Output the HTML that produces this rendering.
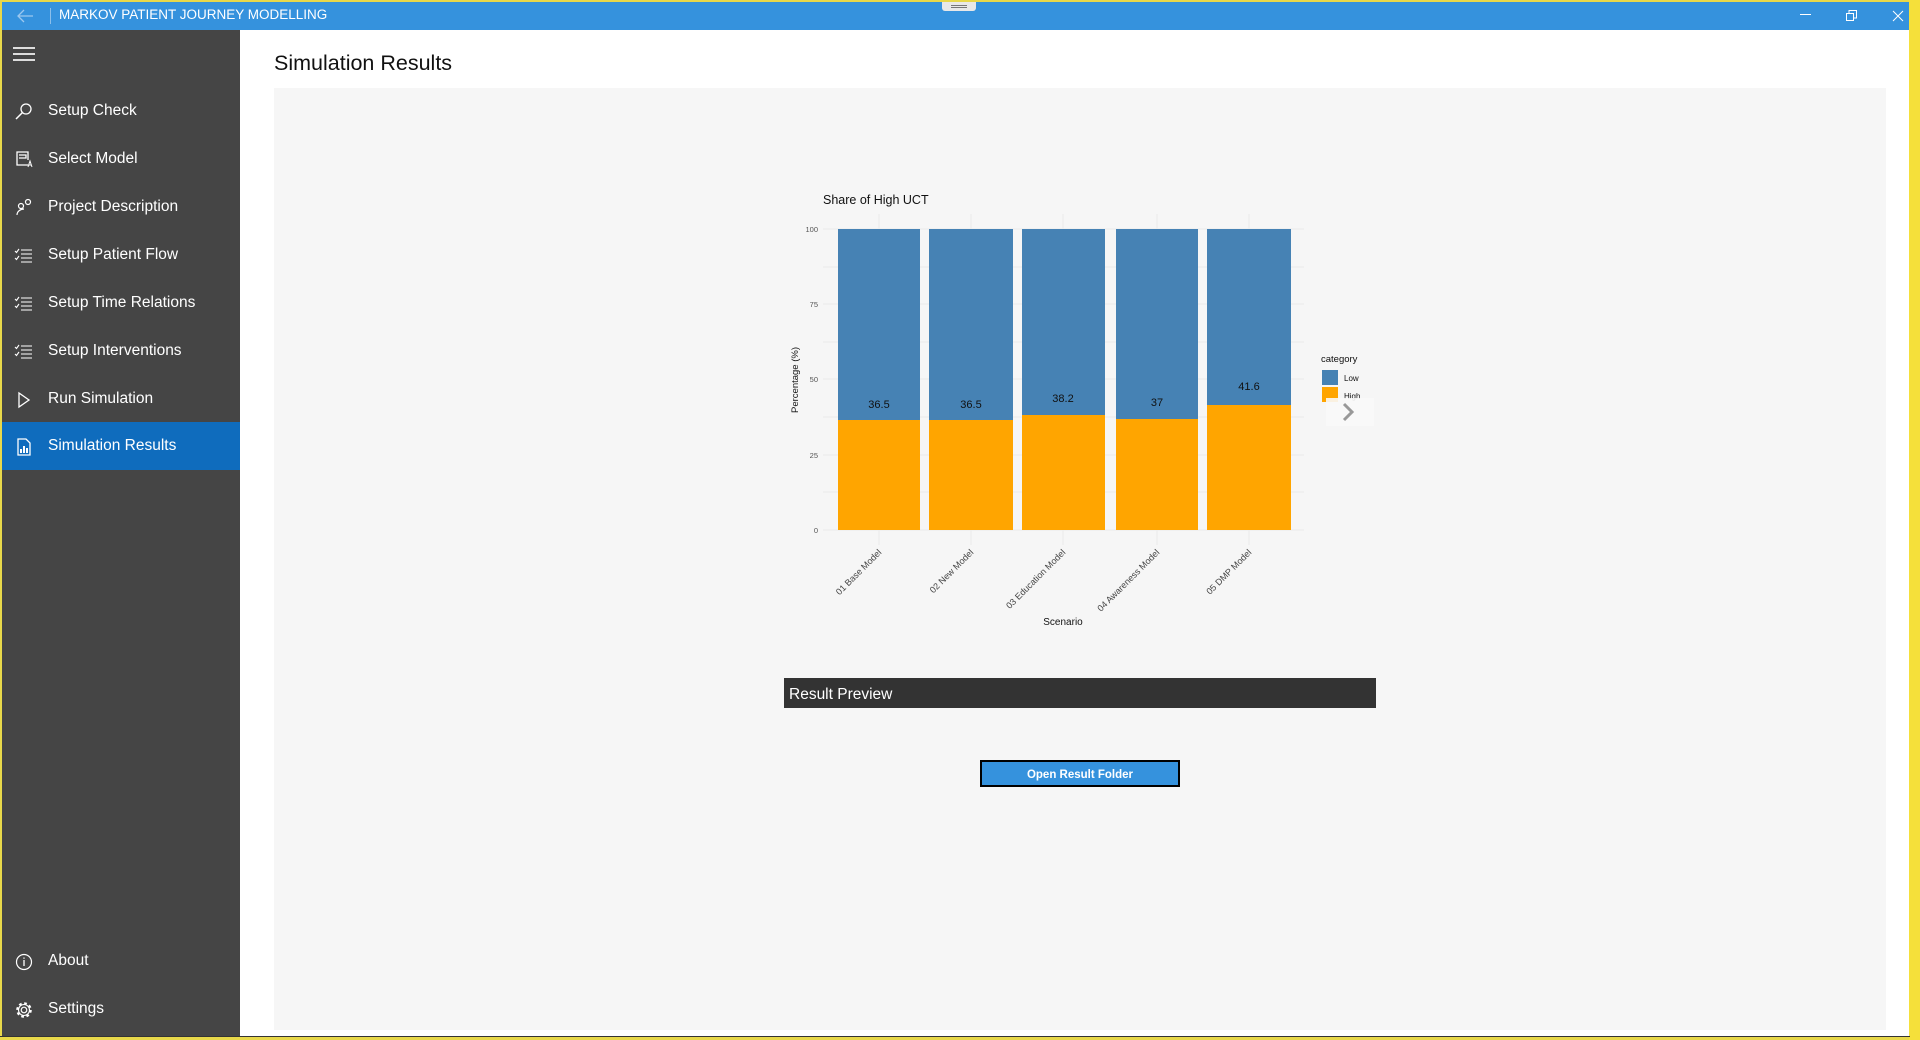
<!DOCTYPE html>
<html><head><meta charset="utf-8"><style>
*{margin:0;padding:0;box-sizing:border-box}
body{width:1920px;height:1040px;position:relative;overflow:hidden;background:#e8d84a;font-family:"Segoe UI","Liberation Sans",sans-serif}
.a{position:absolute}
#tb{left:2px;top:2px;width:1907px;height:28px;background:#3592dd;color:#fff;font-size:14px}
#sb{left:2px;top:30px;width:238px;height:1006px;background:#454545}
#main{left:240px;top:30px;width:1669px;height:1006px;background:#fff}
.it{position:absolute;left:0;width:238px;height:48px;color:#fff;font-size:15.5px;line-height:48px;padding-left:46px}
.ic{position:absolute;left:12px;top:15px;width:20px;height:20px}
</style></head><body>
<div class="a" style="left:1909px;top:0;width:11px;height:1040px;background:#f5e03a"></div>
<div class="a" style="left:1908px;top:2px;width:1px;height:1035px;background:#333"></div>
<div class="a" style="left:0;top:1036px;width:1910px;height:1px;background:#333"></div>
<div class="a" id="tb">
 <svg class="a" style="left:14px;top:7px" width="18" height="14" viewBox="0 0 18 14"><path d="M8 1L2 7L8 13M2 7H17" stroke="#9cc8ef" stroke-width="1.3" fill="none"/></svg>
 <div class="a" style="left:48px;top:6px;width:1px;height:16px;background:#8cbfea"></div>
 <div class="a" style="left:57px;top:5px;font-size:13.5px">MARKOV PATIENT JOURNEY MODELLING</div>
 <div class="a" style="left:940px;top:0;width:34px;height:9px;background:#e8e8e8;border-radius:0 0 3px 3px"><div style="margin:3px 9px;border-top:1px solid #777;border-bottom:1px solid #777;height:3px"></div></div>
 <div class="a" style="left:1798px;top:12px;width:11px;height:1px;background:#fff"></div>
 <svg class="a" style="left:1844px;top:8px" width="12" height="12"><rect x="0.5" y="3.5" width="7" height="7" fill="none" stroke="#fff"/><path d="M3 3.5V0.5H10.5V8H8" fill="none" stroke="#fff"/></svg>
 <svg class="a" style="left:1890px;top:8px" width="12" height="12"><path d="M1 1L11 11M11 1L1 11" stroke="#fff"/></svg>
</div>
<div class="a" id="sb">
 <svg class="a" style="left:11px;top:16px" width="22" height="16"><path d="M0 2H22M0 8H22M0 14H22" stroke="#ddd" stroke-width="2"/></svg>
 <div class="it" style="top:57px"><svg class="ic" viewBox="0 0 20 20"><circle cx="12" cy="7" r="5" fill="none" stroke="#fff" stroke-width="1.3"/><path d="M8.5 10.5L2 17" stroke="#fff" stroke-width="1.5"/></svg>Setup Check</div>
 <div class="it" style="top:105px"><svg class="ic" viewBox="0 0 20 20"><path d="M14 15H3V2H14V10M5 5H12V8H5" fill="none" stroke="#fff" stroke-width="1.3"/><path d="M14 17L16 11L18 17M14.7 15H17.3" stroke="#fff" fill="none"/></svg>Select Model</div>
 <div class="it" style="top:153px"><svg class="ic" viewBox="0 0 20 20"><circle cx="7" cy="8" r="2.5" fill="none" stroke="#fff" stroke-width="1.2"/><circle cx="14" cy="4" r="2.5" fill="none" stroke="#fff" stroke-width="1.2"/><path d="M3 17C3 13 7 11 10 11M3 17" fill="none" stroke="#fff" stroke-width="1.2"/></svg>Project Description</div>
 <div class="it" style="top:201px"><svg class="ic" viewBox="0 0 20 20"><path d="M7 4H18M7 8H18M7 12H18M7 16H18M1 5L2.5 6.5L5 3M1 12L2.5 13.5L5 10" fill="none" stroke="#fff" stroke-width="1.1"/></svg>Setup Patient Flow</div>
 <div class="it" style="top:249px"><svg class="ic" viewBox="0 0 20 20"><path d="M7 4H18M7 8H18M7 12H18M7 16H18M1 5L2.5 6.5L5 3M1 12L2.5 13.5L5 10" fill="none" stroke="#fff" stroke-width="1.1"/></svg>Setup Time Relations</div>
 <div class="it" style="top:297px"><svg class="ic" viewBox="0 0 20 20"><path d="M7 4H18M7 8H18M7 12H18M7 16H18M1 5L2.5 6.5L5 3M1 12L2.5 13.5L5 10" fill="none" stroke="#fff" stroke-width="1.1"/></svg>Setup Interventions</div>
 <div class="it" style="top:345px"><svg class="ic" viewBox="0 0 20 20"><path d="M5 3V17L15 10Z" fill="none" stroke="#fff" stroke-width="1.3"/></svg>Run Simulation</div>
 <div class="it" style="top:392px;background:#0f6cbd"><svg class="ic" viewBox="0 0 20 20"><path d="M4 2H12L16 6V18H4Z" fill="none" stroke="#fff" stroke-width="1.3"/><path d="M7 16V12M10 16V9M13 16V11" stroke="#fff" stroke-width="2"/></svg>Simulation Results</div>
 <div class="it" style="top:907px"><svg class="ic" viewBox="0 0 20 20"><circle cx="10" cy="10" r="7.5" fill="none" stroke="#fff" stroke-width="1.2"/><path d="M10 8V14M10 5.5V6.8" stroke="#fff" stroke-width="1.3"/></svg>About</div>
 <div class="it" style="top:955px"><svg class="ic" viewBox="0 0 20 20"><circle cx="10" cy="10" r="2.8" fill="none" stroke="#fff" stroke-width="1.2"/><circle cx="10" cy="10" r="6.5" fill="none" stroke="#fff" stroke-width="2.6" stroke-dasharray="2.6 2.5"/><circle cx="10" cy="10" r="5.5" fill="none" stroke="#fff" stroke-width="1.1"/></svg>Settings</div>
</div>
<div class="a" id="main">
 <div class="a" style="left:34px;top:21px;font-size:21.5px;color:#111">Simulation Results</div>
 <div class="a" style="left:34px;top:58px;width:1612px;height:942px;background:#f6f6f6"></div>
</div>
<svg class="a" style="left:0;top:0" width="1920" height="1040" font-family="Liberation Sans,sans-serif">
 <g stroke="#ebebeb" stroke-width="1">
  <path d="M823 229H1304M823 304H1304M823 379H1304M823 455H1304M823 530H1304M823 267H1304M823 342H1304M823 417H1304M823 492H1304"/>
  <path d="M879 214V545M971 214V545M1063 214V545M1157 214V545M1249 214V545"/>
 </g>
 <g fill="#4682b4"><rect x="838" y="229" width="82" height="301"/><rect x="929" y="229" width="84" height="301"/><rect x="1022" y="229" width="83" height="301"/><rect x="1116" y="229" width="82" height="301"/><rect x="1207" y="229" width="84" height="301"/></g>
 <g fill="#ffa500"><rect x="838" y="420" width="82" height="110"/><rect x="929" y="420" width="84" height="110"/><rect x="1022" y="415" width="83" height="115"/><rect x="1116" y="419" width="82" height="111"/><rect x="1207" y="405" width="84" height="125"/></g>
 <g font-size="11" fill="#111" text-anchor="middle"><text x="879" y="408">36.5</text><text x="971" y="408">36.5</text><text x="1063" y="402">38.2</text><text x="1157" y="406">37</text><text x="1249" y="390">41.6</text></g>
 <text x="823" y="204" font-size="12.5" fill="#111">Share of High UCT</text>
 <g font-size="7.5" fill="#555" text-anchor="end"><text x="818" y="232">100</text><text x="818" y="307">75</text><text x="818" y="382">50</text><text x="818" y="458">25</text><text x="818" y="533">0</text></g>
 <text transform="translate(798,380) rotate(-90)" font-size="9.5" fill="#111" text-anchor="middle">Percentage (%)</text>
 <g font-size="9" fill="#444" text-anchor="end">
  <text transform="translate(882,553) rotate(-45)">01 Base Model</text>
  <text transform="translate(974,553) rotate(-45)">02 New Model</text>
  <text transform="translate(1066,553) rotate(-45)">03 Education Model</text>
  <text transform="translate(1160,553) rotate(-45)">04 Awareness Model</text>
  <text transform="translate(1252,553) rotate(-45)">05 DMP Model</text>
 </g>
 <text x="1063" y="625" font-size="10" fill="#111" text-anchor="middle">Scenario</text>
 <text x="1321" y="362" font-size="9.5" fill="#111">category</text>
 <rect x="1322" y="370" width="16" height="15" fill="#4682b4"/><rect x="1322" y="387" width="16" height="15" fill="#ffa500"/>
 <text x="1344" y="381" font-size="8" fill="#111">Low</text><text x="1344" y="399" font-size="8" fill="#111">High</text>
 <rect x="1326" y="398" width="48" height="28" fill="#fafafa" opacity="0.9"/>
 <path d="M1344 404L1352 412L1344 420" stroke="#999" stroke-width="3" fill="none"/>
 <rect x="784" y="678" width="592" height="30" fill="#333"/>
 <text x="789" y="699" font-size="15.5" fill="#fff" font-family="Segoe UI,Liberation Sans,sans-serif">Result Preview</text>
 <rect x="981" y="761" width="198" height="25" fill="#3592dd" stroke="#000" stroke-width="2"/>
 <text x="1080" y="778" font-size="11.5" font-weight="bold" fill="#fff" text-anchor="middle">Open Result Folder</text>
</svg>
</body></html>
